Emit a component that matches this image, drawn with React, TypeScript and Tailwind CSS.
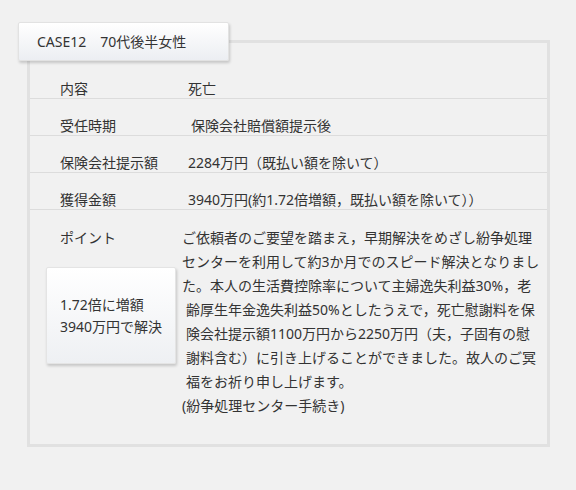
import React from "react";

const rows: { label: string; value: string; pad?: boolean }[] = [
  { label: "内容", value: "死亡" },
  { label: "受任時期", value: "保険会社賠償額提示後", pad: true },
  { label: "保険会社提示額", value: "2284万円（既払い額を除いて）" },
  { label: "獲得金額", value: "3940万円(約1.72倍増額，既払い額を除いて））" },
];

const lines: { text: string; indent?: boolean }[] = [
  { text: "ご依頼者のご要望を踏まえ，早期解決をめざし紛争処理" },
  { text: "センターを利用して約3か月でのスピード解決となりまし" },
  { text: "た。本人の生活費控除率について主婦逸失利益30%，老" },
  { text: "齢厚生年金逸失利益50%としたうえで，死亡慰謝料を保", indent: true },
  { text: "険会社提示額1100万円から2250万円（夫，子固有の慰", indent: true },
  { text: "謝料含む）に引き上げることができました。故人のご冥", indent: true },
  { text: "福をお祈り申し上げます。", indent: true },
  { text: "(紛争処理センター手続き)" },
];

export default function App() {
  return (
    <div
      className="w-[576px] h-[490px] bg-[#f1f1f1] text-[#333] text-[14px] pt-[22px] pl-[18px]"
      style={{ fontFamily: '"Noto Sans", "Noto Sans CJK JP", sans-serif' }}
    >
      <div className="relative z-10 w-[211px] h-[39px] flex items-center pl-[18px] rounded-[2px] border border-[#e2e2e2] bg-gradient-to-b from-white to-[#eceef2] shadow-[1px_2px_3px_rgba(0,0,0,0.18)]">
        CASE12　70代後半女性
      </div>
      <div className="ml-[9px] mt-[-21px] w-[523px] h-[407px] border-[3px] border-[#e1e1e1] pt-[19px]">
        {rows.map((r) => (
          <div
            key={r.label}
            className="h-[37px] border-b border-[#dcdcdc] flex items-end pl-[30px]"
          >
            <div className="w-[128px] leading-[16px] pb-[1px]">{r.label}</div>
            <div className={`leading-[16px] pb-[1px] ${r.pad ? "pl-[3px]" : ""}`}>{r.value}</div>
          </div>
        ))}
        <div className="flex pt-[16px]">
          <div className="w-[152px] shrink-0">
            <div className="pl-[30px] leading-[23px]">ポイント</div>
            <div className="ml-[16px] mt-[18px] w-[130px] h-[97px] flex flex-col justify-center pl-[13px] leading-[22px] border border-[#e4e4e4] rounded-[2px] bg-gradient-to-b from-white to-[#eef0f3] shadow-[1px_2px_3px_rgba(0,0,0,0.18)]">
              <div>1.72倍に増額</div>
              <div>3940万円で解決</div>
            </div>
          </div>
          <div className="leading-[24px] whitespace-nowrap">
            {lines.map((l, i) => (
              <div key={i} className={l.indent ? "pl-[4px]" : ""}>
                {l.text}
              </div>
            ))}
          </div>
        </div>
      </div>
    </div>
  );
}
